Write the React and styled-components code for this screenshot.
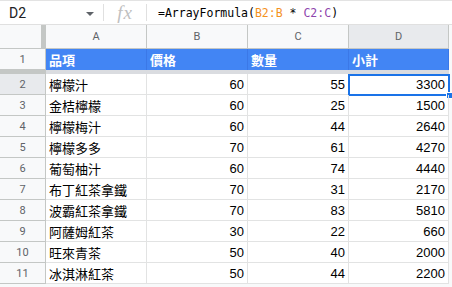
import React from 'react';
import styled, { createGlobalStyle } from 'styled-components';

const GlobalStyle = createGlobalStyle`
  * { box-sizing: border-box; }
  body {
    margin: 0;
    background: #f8f9fa;
    font-family: "Liberation Sans", Arial, "Noto Sans CJK TC", sans-serif;
  }
`;

const Page = styled.div`
  width: 452px;
  height: 287px;
  overflow: hidden;
  background: #f8f9fa;
`;

const FormulaBar = styled.div`
  display: flex;
  align-items: center;
  height: 25px;
  background: #fff;
  border-top: 1px solid #e3e3e3;
  border-bottom: 1px solid #e0e0e0;
`;

const NameBox = styled.div`
  display: flex;
  align-items: center;
  justify-content: space-between;
  width: 104px;
  padding: 0 9px 0 9px;
  font-family: Roboto, "Liberation Sans", sans-serif;
  font-size: 14px;
  color: #202124;
  border-right: 1px solid #e0e0e0;
  height: 17px;
`;

const Caret = styled.span`
  width: 0;
  height: 0;
  border-left: 4px solid transparent;
  border-right: 4px solid transparent;
  border-top: 4px solid #5f6368;
  margin-top: 2px;
`;

const FxIcon = styled.div`
  width: 43px;
  height: 17px;
  display: flex;
  align-items: center;
  justify-content: center;
  border-right: 1px solid #e0e0e0;
  font-family: "Liberation Serif", serif;
  font-style: italic;
  font-size: 19px;
  color: #c0c0c0;
  letter-spacing: 1px;
`;

const Formula = styled.div`
  padding-left: 11px;
  font-family: "DejaVu Sans Mono", monospace;
  font-size: 11.5px;
  color: #000;
  white-space: pre;
`;

const Ref = styled.span`
  color: ${(p) => p.$color};
`;

const Grid = styled.div`
  display: grid;
  grid-template-columns: 46px 101px 101px 101px 100px;
  grid-template-rows: 24px 21px 4px repeat(10, 21px);
  background: #fff;
  width: 449px;
`;

const Corner = styled.div`
  background: #f8f9fa;
  border-right: 5px solid #c4c7c5;
  border-bottom: 1px solid #c4c7c5;
`;

const ColHead = styled.div`
  display: flex;
  align-items: center;
  justify-content: center;
  background: ${(p) => (p.$active ? '#e8eaed' : '#f8f9fa')};
  border-right: 1px solid #c4c7c5;
  border-bottom: 1px solid #c4c7c5;
  font-family: Roboto, "Liberation Sans", sans-serif;
  font-size: 11px;
  color: #5f6368;
`;

const RowHead = styled.div`
  display: flex;
  align-items: center;
  justify-content: center;
  background: ${(p) => (p.$active ? '#e8eaed' : '#f8f9fa')};
  border-right: 1px solid #c4c7c5;
  border-bottom: 1px solid #c4c7c5;
  font-family: Roboto, "Liberation Sans", sans-serif;
  font-size: 11px;
  color: #5f6368;
`;

const Freeze = styled.div`
  background: ${(p) => (p.$head ? '#c4c7c5' : '#dadce0')};
`;

const Cell = styled.div`
  position: relative;
  display: flex;
  align-items: center;
  justify-content: ${(p) => (p.$num ? 'flex-end' : 'flex-start')};
  padding: 0 3px;
  border-right: 1px solid #e2e3e3;
  border-bottom: 1px solid #e2e3e3;
  font-size: 13px;
  color: #000;
  white-space: nowrap;
`;

const HeadCell = styled(Cell)`
  background: #4285f4;
  color: #fff;
  font-weight: bold;
  border-right-color: #3b78e7;
  border-bottom: none;
`;

const Selection = styled.div`
  position: absolute;
  top: 0;
  left: -1px;
  right: -2px;
  bottom: -2px;
  border: 2px solid #1a73e8;
  pointer-events: none;
`;

const Handle = styled.div`
  position: absolute;
  right: -5px;
  bottom: -5px;
  width: 7px;
  height: 7px;
  background: #1a73e8;
  border: 1px solid #fff;
`;

const rows = [
  ['檸檬汁', 60, 55, 3300],
  ['金桔檸檬', 60, 25, 1500],
  ['檸檬梅汁', 60, 44, 2640],
  ['檸檬多多', 70, 61, 4270],
  ['葡萄柚汁', 60, 74, 4440],
  ['布丁紅茶拿鐵', 70, 31, 2170],
  ['波霸紅茶拿鐵', 70, 83, 5810],
  ['阿薩姆紅茶', 30, 22, 660],
  ['旺來青茶', 50, 40, 2000],
  ['冰淇淋紅茶', 50, 44, 2200],
];

const App = () => (
  <Page>
    <GlobalStyle />
    <FormulaBar>
      <NameBox>
        D2
        <Caret />
      </NameBox>
      <FxIcon>fx</FxIcon>
      <Formula>
        =ArrayFormula(<Ref $color="#f4921f">B2:B</Ref> * <Ref $color="#8e44ad">C2:C</Ref>)
      </Formula>
    </FormulaBar>
    <Grid>
      <Corner />
      {['A', 'B', 'C', 'D'].map((c) => (
        <ColHead key={c} $active={c === 'D'}>{c}</ColHead>
      ))}

      <RowHead>1</RowHead>
      {['品項', '價格', '數量', '小計'].map((h) => (
        <HeadCell key={h}>{h}</HeadCell>
      ))}

      <Freeze $head />
      <Freeze />
      <Freeze />
      <Freeze />
      <Freeze />

      {rows.map(([name, price, qty, total], i) => (
        <React.Fragment key={name}>
          <RowHead $active={i === 0}>{i + 2}</RowHead>
          <Cell>{name}</Cell>
          <Cell $num>{price}</Cell>
          <Cell $num>{qty}</Cell>
          <Cell $num>
            {total}
            {i === 0 && (
              <Selection>
                <Handle />
              </Selection>
            )}
          </Cell>
        </React.Fragment>
      ))}
    </Grid>
  </Page>
);

export default App;
